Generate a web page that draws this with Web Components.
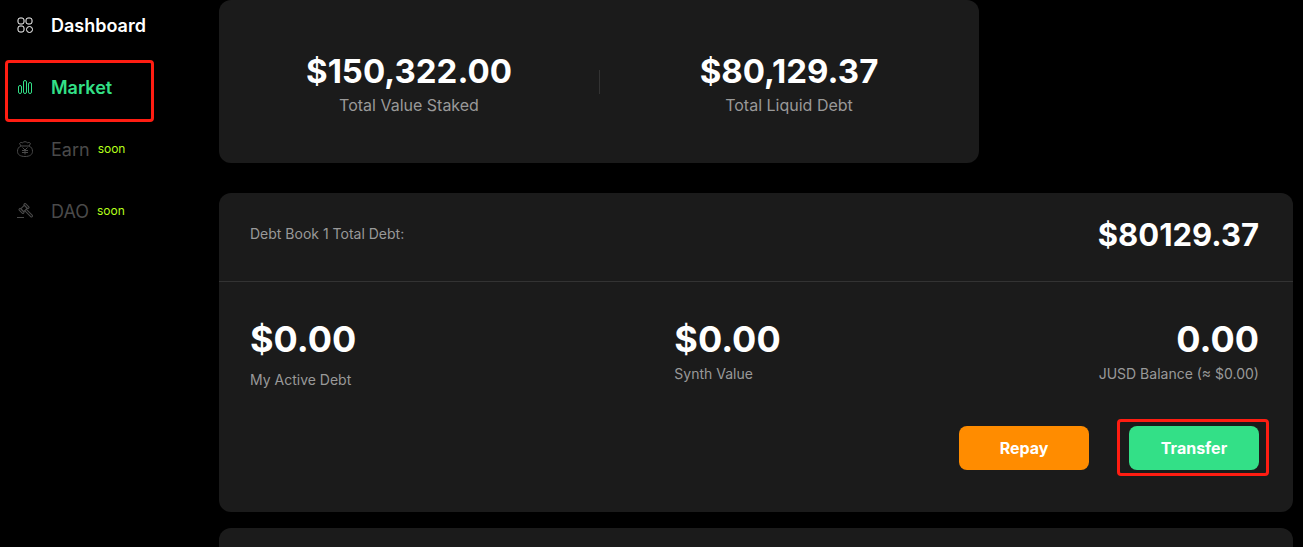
<!DOCTYPE html>
<html lang="en">
<head>
<meta charset="utf-8">
<title>Market</title>
<style>
  body {
    margin: 0;
    background-color: #000;
    color: #fff;
    font-family: Inter, "Liberation Sans", sans-serif;
  }
</style>
</head>
<body>
<debt-app>
  <side-nav slot="nav">
    <nav-item icon="grid" href="#dashboard">Dashboard</nav-item>
    <nav-item icon="bars" href="#market" active marked>Market</nav-item>
    <nav-item icon="bag" disabled note="soon">Earn</nav-item>
    <nav-item icon="gavel" disabled note="soon">DAO</nav-item>
  </side-nav>

  <total-card>
    <total-value label="Total Value Staked">$150,322.00</total-value>
    <total-value label="Total Liquid Debt">$80,129.37</total-value>
  </total-card>

  <debt-card>
    <span slot="title">Debt Book 1 Total Debt:</span>
    <span slot="total">$80129.37</span>
    <debt-figure label="My Active Debt" spaced>$0.00</debt-figure>
    <debt-figure label="Synth Value">$0.00</debt-figure>
    <debt-figure label="JUSD Balance (≈ $0.00)" end>0.00</debt-figure>
    <action-button slot="actions" color="orange">Repay</action-button>
    <action-button slot="actions" color="green" marked>Transfer</action-button>
  </debt-card>

  <empty-card></empty-card>
</debt-app>

<script>
const icons = {
  grid: `
    <rect x="1" y="1" width="6" height="6" rx="2"/>
    <rect x="9" y="1" width="6" height="6" rx="2"/>
    <rect x="1" y="9" width="6" height="6" rx="2"/>
    <circle cx="12.5" cy="12.5" r="3"/>`,
  bars: `
    <rect x="1.5" y="6.5" width="3" height="8" rx="1.5"/>
    <rect x="6.5" y="1.5" width="3" height="13" rx="1.5"/>
    <rect x="11.5" y="3.5" width="3" height="11" rx="1.5"/>`,
  bag: `
    <path d="M4 5C1.5 6 .5 8 .5 10.3.5 13.6 3.2 15.5 8 15.5S15.5 13.6 15.5 10.3C15.5 8 14.5 6 12 5Z"/>
    <path d="M4 5 2.500 2.500C3.300 1.300 4.800 1.200 5.700 1.800 6.700.3 9.300.3 10.300 1.800 11.200 1.200 12.700 1.300 13.500 2.500L12 5"/>
    <path d="M5.5 6.5 8 9 10.5 6.5M8 9V13.5M5 9.5H11M5 11.5H11"/>`,
  gavel: `
    <g transform="translate(7 5.5) rotate(-45)">
      <rect x="-2.500" y="-2" width="5" height="4"/>
      <rect x="-4.500" y="-3" width="2" height="6" rx="0.700"/>
      <rect x="2.500" y="-3" width="2" height="6" rx="0.700"/>
      <path d="M-1 2V10.500A1 1 0 0 0 1 10.500V2"/>
    </g>
    <path d="M0 14.500H7"/>`
}

// red frame laid over an element that has the "marked" attribute
const frame = /* css */ `
  content: "";
  position: absolute;
  border: 3px solid #ff1d12;
  border-radius: 4px;
  pointer-events: none;
`

class Base extends HTMLElement {
  constructor() {
    super()
    this.attachShadow({ mode: 'open' })
    this.shadowRoot.innerHTML = this.render()
  }
}

class DebtApp extends Base {
  render() {
    return /* html */ `
      <style>
        :host {
          display: grid;
          grid-template-columns: 219px minmax(0, 1fr);
          height: 100vh;
          overflow: hidden;
        }
        main {
          display: flex;
          flex-direction: column;
          padding-right: 10px;
        }
      </style>
      <slot name="nav"></slot>
      <main><slot></slot></main>
    `
  }
}

class SideNav extends Base {
  render() {
    return /* html */ `
      <style>
        :host {
          display: block;
        }
        nav {
          display: flex;
          flex-direction: column;
          gap: 40px;
          padding: 15px 0 0 17px;
        }
      </style>
      <nav><slot></slot></nav>
    `
  }
}

class NavItem extends Base {
  render() {
    const link = this.hasAttribute('disabled')
      ? '<a aria-disabled="true">'
      : `<a href="${this.getAttribute('href')}">`
    const note = this.getAttribute('note')
    return /* html */ `
      <style>
        :host {
          display: block;
          position: relative;
          font-size: 18px;
          font-weight: 600;
          line-height: 22px;
        }
        a {
          display: flex;
          align-items: center;
          color: inherit;
          text-decoration: none;
        }
        svg {
          width: 16px;
          height: 16px;
          margin: 0 18px 2px 0;
          fill: none;
          stroke: currentColor;
        }
        small {
          margin: 0 0 2px 8px;
          font-size: 12px;
          line-height: 20px;
          color: #b4ff1a;
        }
        :host([active]) {
          color: #33e087;
        }
        :host([disabled]) {
          color: #4a4a4a;
          font-weight: 400;
        }
        :host([marked])::after {
          ${frame}
          inset: -17px 65px -23px -12px;
        }
      </style>
      ${link}
        <svg viewBox="0 0 16 16" aria-hidden="true">${icons[this.getAttribute('icon')]}</svg>
        <slot></slot>
        ${note ? `<small>${note}</small>` : ''}
      </a>
    `
  }
}

class TotalCard extends Base {
  render() {
    return /* html */ `
      <style>
        :host {
          display: grid;
          grid-template-columns: 1fr 1fr;
          box-sizing: border-box;
          width: 100%;
          max-width: 760px;
          margin-bottom: 30px;
          padding: 47px 0 48px;
          border-radius: 12px;
          background: linear-gradient(#333, #333) center / 1px 24px no-repeat #1b1b1b;
        }
      </style>
      <slot></slot>
    `
  }
}

class TotalValue extends Base {
  render() {
    return /* html */ `
      <style>
        :host {
          display: block;
          text-align: center;
        }
        .value {
          font-size: 33px;
          font-weight: 700;
          line-height: 48px;
        }
        .label {
          font-size: 16px;
          line-height: 20px;
          color: #999;
        }
      </style>
      <div class="value"><slot></slot></div>
      <div class="label">${this.getAttribute('label')}</div>
    `
  }
}

class DebtCard extends Base {
  render() {
    return /* html */ `
      <style>
        :host {
          display: block;
          margin-bottom: 16px;
          border-radius: 12px;
          background-color: #1b1b1b;
        }
        header {
          display: flex;
          align-items: flex-start;
          justify-content: space-between;
          padding: 22px 34px 26px 31px;
          border-bottom: 1px solid #333;
        }
        .title {
          font-size: 14px;
          line-height: 38px;
          color: #999;
        }
        .total {
          font-size: 31px;
          font-weight: 700;
          line-height: 40px;
        }
        section {
          padding: 32px 34px 42px 31px;
        }
        .figures {
          display: flex;
          justify-content: space-between;
        }
        .actions {
          display: flex;
          justify-content: flex-end;
          gap: 40px;
          margin-top: 36px;
        }
      </style>
      <header>
        <div class="title"><slot name="title"></slot></div>
        <div class="total"><slot name="total"></slot></div>
      </header>
      <section>
        <div class="figures"><slot></slot></div>
        <div class="actions"><slot name="actions"></slot></div>
      </section>
    `
  }
}

class DebtFigure extends Base {
  render() {
    return /* html */ `
      <style>
        :host {
          display: block;
        }
        :host([end]) {
          text-align: right;
        }
        .value {
          font-size: 36px;
          font-weight: 700;
          line-height: 50px;
        }
        .label {
          font-size: 14px;
          line-height: 20px;
          color: #999;
        }
        :host([spaced]) .label {
          margin-top: 6px;
        }
      </style>
      <div class="value"><slot></slot></div>
      <div class="label">${this.getAttribute('label')}</div>
    `
  }
}

class ActionButton extends Base {
  render() {
    return /* html */ `
      <style>
        :host {
          display: block;
          position: relative;
        }
        button {
          display: block;
          width: 130px;
          height: 44px;
          padding: 0;
          border: 0;
          border-radius: 8px;
          background-color: #ff8c00;
          color: #fff;
          font: 700 16px/20px Inter, "Liberation Sans", sans-serif;
          cursor: pointer;
        }
        :host([color="green"]) button {
          background-color: #33e087;
        }
        :host([marked])::after {
          ${frame}
          inset: -7px -10px -6px -12px;
        }
      </style>
      <button type="button"><slot></slot></button>
    `
  }
}

class EmptyCard extends Base {
  render() {
    return /* html */ `
      <style>
        :host {
          display: block;
          flex: none;
          height: 88px;
          border-radius: 12px;
          background-color: #1b1b1b;
        }
      </style>
    `
  }
}

customElements.define('debt-app', DebtApp)
customElements.define('side-nav', SideNav)
customElements.define('nav-item', NavItem)
customElements.define('total-card', TotalCard)
customElements.define('total-value', TotalValue)
customElements.define('debt-card', DebtCard)
customElements.define('debt-figure', DebtFigure)
customElements.define('action-button', ActionButton)
customElements.define('empty-card', EmptyCard)
</script>
</body>
</html>
